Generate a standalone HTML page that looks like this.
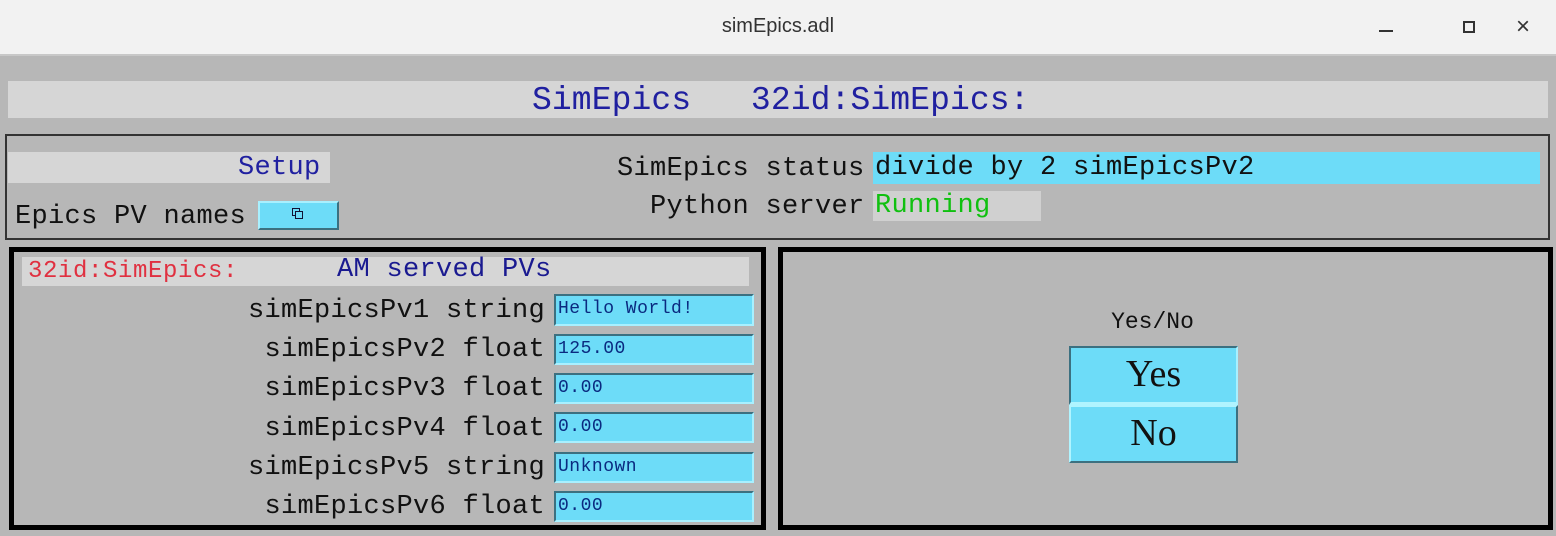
<!DOCTYPE html>
<html><head><style>
body{margin:0;width:1556px;height:536px;background:#b7b7b7;position:relative;overflow:hidden;font-family:"Liberation Mono",monospace}
div{position:absolute;box-sizing:border-box}
.t{white-space:pre}
.lbl{font-size:27px;letter-spacing:0.3px;color:#111;right:0;text-align:right;line-height:30px}
.in{background:#6ddcf8;border-top:2px solid #3c7080;border-left:2px solid #3c7080;border-bottom:2px solid #a8f0ff;border-right:2px solid #a8f0ff;font-size:18px;color:#0a2a80;padding-left:2px;line-height:26px;letter-spacing:0.5px}
</style></head><body>
<div style="left:0;top:0;width:1556px;height:56px;background:#f2f2f2;border-bottom:2px solid #c8c8c8"></div>
<div class="t" style="left:0;width:1556px;top:15px;text-align:center;font-family:'Liberation Sans',sans-serif;font-size:20px;color:#333">simEpics.adl</div>
<div style="left:1379px;top:30px;width:14px;height:2px;background:#333"></div>
<div style="left:1463px;top:21px;width:12px;height:12px;border:2px solid #333"></div>
<div class="t" style="left:1516px;top:13px;font-family:'Liberation Sans',sans-serif;font-size:24px;color:#333">×</div>

<div style="left:8px;top:81px;width:1540px;height:37px;background:#d6d6d6"></div>
<div class="t" style="left:532px;top:81px;font-size:33px;letter-spacing:0.1px;color:#2020a0;line-height:40px">SimEpics   32id:SimEpics:</div>

<div style="left:5px;top:134px;width:1545px;height:106px;border:2px solid #333"></div>
<div style="left:8px;top:152px;width:322px;height:31px;background:#d6d6d6"></div>
<div class="t" style="left:238px;top:153px;font-size:27px;letter-spacing:0.3px;color:#2020a0;line-height:31px">Setup</div>
<div class="t" style="left:15px;top:202px;font-size:27px;letter-spacing:0.3px;color:#111;line-height:30px">Epics PV names</div>
<div style="left:258px;top:201px;width:81px;height:29px;background:#6ddcf8;border-top:2px solid #a8f0ff;border-left:2px solid #a8f0ff;border-bottom:2px solid #3c7080;border-right:2px solid #3c7080"></div>
<div style="left:292px;top:208px;width:8px;height:8px;border:1.5px solid #113"></div>
<div style="left:295px;top:211px;width:8px;height:8px;border:1.5px solid #113;background:#6ddcf8"></div>
<div class="t" style="left:617px;top:154px;font-size:27px;letter-spacing:0.3px;color:#111;line-height:30px">SimEpics status</div>
<div class="t" style="left:650px;top:192px;font-size:27px;letter-spacing:0.3px;color:#111;line-height:30px">Python server</div>
<div class="t" style="left:873px;top:152px;width:667px;height:32px;background:#6ddcf8;font-size:27px;letter-spacing:0.3px;color:#111;line-height:32px;padding-left:2px">divide by 2 simEpicsPv2</div>
<div class="t" style="left:873px;top:191px;width:168px;height:30px;background:#d0d0d0;font-size:27px;letter-spacing:0.3px;color:#10c010;line-height:30px;padding-left:2px">Running</div>

<div style="left:9px;top:247px;width:757px;height:283px;border:5px solid #000"></div>
<div style="left:22px;top:257px;width:727px;height:29px;background:#d6d6d6"></div>
<div class="t" style="left:28px;top:257px;font-size:24px;letter-spacing:0.6px;color:#e03040;line-height:29px">32id:SimEpics:</div>
<div class="t" style="left:337px;top:256px;font-size:27px;letter-spacing:0.3px;color:#1a1a90;line-height:29px">AM served PVs</div>

<div class="t lbl" style="left:0;width:545px;top:296px">simEpicsPv1 string</div>
<div class="t lbl" style="left:0;width:545px;top:335px">simEpicsPv2 float</div>
<div class="t lbl" style="left:0;width:545px;top:374px">simEpicsPv3 float</div>
<div class="t lbl" style="left:0;width:545px;top:414px">simEpicsPv4 float</div>
<div class="t lbl" style="left:0;width:545px;top:453px">simEpicsPv5 string</div>
<div class="t lbl" style="left:0;width:545px;top:492px">simEpicsPv6 float</div>
<div class="t in" style="left:554px;top:294px;width:200px;height:32px">Hello World!</div>
<div class="t in" style="left:554px;top:334px;width:200px;height:31px">125.00</div>
<div class="t in" style="left:554px;top:373px;width:200px;height:31px">0.00</div>
<div class="t in" style="left:554px;top:412px;width:200px;height:31px">0.00</div>
<div class="t in" style="left:554px;top:452px;width:200px;height:31px">Unknown</div>
<div class="t in" style="left:554px;top:491px;width:200px;height:31px">0.00</div>

<div style="left:778px;top:247px;width:775px;height:283px;border:5px solid #000"></div>
<div class="t" style="left:1050px;width:205px;top:309px;text-align:center;font-family:'Liberation Mono',monospace;font-size:23px;color:#111">Yes/No</div>
<div class="t" style="left:1069px;top:346px;width:169px;height:59px;background:#6ddcf8;border-top:2px solid #3c7080;border-left:2px solid #3c7080;border-right:2px solid #a8f0ff;border-bottom:3px solid #b0f4ff;text-align:center;font-family:'Liberation Serif',serif;font-size:38px;line-height:52px;color:#111">Yes</div>
<div class="t" style="left:1069px;top:405px;width:169px;height:58px;background:#6ddcf8;border-top:2px solid #b0f4ff;border-left:2px solid #b0f4ff;border-right:2px solid #3c7080;border-bottom:2px solid #3c7080;text-align:center;font-family:'Liberation Serif',serif;font-size:38px;line-height:52px;color:#111">No</div>
</body></html>
